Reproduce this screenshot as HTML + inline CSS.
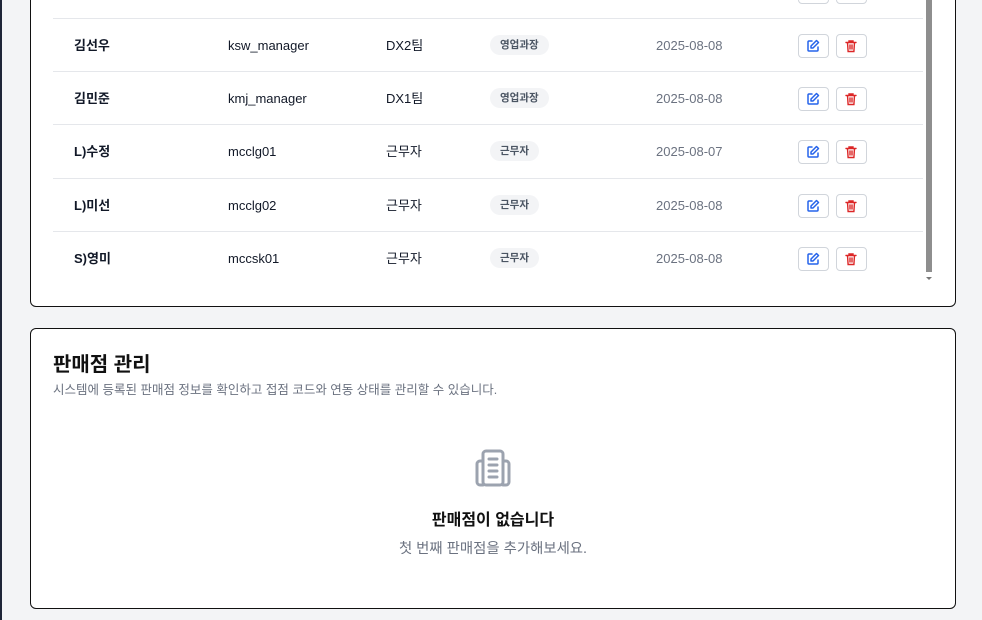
<!DOCTYPE html>
<html><head><meta charset="utf-8"><style>
body{margin:0;width:982px;height:620px;background:#f3f4f6;position:relative;overflow:hidden;font-family:"Liberation Sans","Noto Sans CJK KR",sans-serif;}
.edge{position:absolute;left:0;top:0;width:2px;height:620px;background:#1e2538;}
.card{position:absolute;left:30px;width:924px;background:#fff;border:1px solid #111;border-radius:6px;}
.row{position:absolute;left:22px;width:870px;height:53px;border-top:1px solid #e5e7eb;font-size:13px;color:#111827;}
.row span{position:absolute;top:0;line-height:53px;}
.badge{background:#f3f4f6;color:#4b5563;font-size:10.5px;border-radius:10px;padding:0 10px;top:16px!important;line-height:20px!important;font-weight:bold}
.btn{position:absolute;top:15px;width:29px;height:22px;border:1px solid #d1d5db;border-radius:4px;background:#fff;}
.btn svg{position:absolute;left:7px;top:4px}
.sb{position:absolute;left:926px;top:0;width:6px;height:272px;background:#8e8e8e;}
</style></head><body>
<div class="edge"></div>
<div class="card" style="top:-10px;height:315px;"></div>
<div class="sb"></div>
<div style="position:absolute;left:926px;top:277px;width:0;height:0;border-left:3px solid transparent;border-right:3px solid transparent;border-top:3px solid #777"></div>
<div id="rows"></div>
<div class="card" style="top:328px;height:279px;">
<div style="position:absolute;left:22px;top:19px;font-size:20px;font-weight:bold;color:#111">판매점 관리</div>
<div style="position:absolute;left:22px;top:50px;font-size:12.5px;color:#6b7280">시스템에 등록된 판매점 정보를 확인하고 접점 코드와 연동 상태를 관리할 수 있습니다.</div>
<svg style="position:absolute;left:442px;top:118px" width="42" height="42" viewBox="0 0 42 42" fill="none" stroke="#9ca3af" stroke-width="3" stroke-linecap="round"><rect x="10" y="4" width="20" height="34" rx="3"/><path d="M30 14h3a3 3 0 0 1 3 3v18a3 3 0 0 1-3 3h-3M10 14H7a3 3 0 0 0-3 3v18a3 3 0 0 0 3 3h3"/><path d="M16 12h8M16 18h8M16 24h8M16 30h8"/></svg>
<div style="position:absolute;left:0;width:924px;text-align:center;top:177px;font-size:16px;font-weight:bold;color:#111">판매점이 없습니다</div>
<div style="position:absolute;left:0;width:924px;text-align:center;top:208px;font-size:14.4px;color:#6b7280">첫 번째 판매점을 추가해보세요.</div>
</div>
<script>
var d=[["","","","",""],["김선우","ksw_manager","DX2팀","영업과장","2025-08-08"],["김민준","kmj_manager","DX1팀","영업과장","2025-08-08"],["L)수정","mcclg01","근무자","근무자","2025-08-07"],["L)미선","mcclg02","근무자","근무자","2025-08-08"],["S)영미","mccsk01","근무자","근무자","2025-08-08"]];
var tops=[-35,18,71,124,178,231];var h='';
var ed='<svg width="14" height="14" viewBox="0 0 14 14" fill="none" stroke="#2563eb" stroke-width="1.5" stroke-linecap="round" stroke-linejoin="round"><path d="M6 2H3a1 1 0 0 0-1 1v8a1 1 0 0 0 1 1h8a1 1 0 0 0 1-1V8"/><path d="M10.5 1.5l2 2L7 9H5V7z"/></svg>';
var tr='<svg width="14" height="14" viewBox="0 0 14 14" fill="none" stroke="#dc2626" stroke-width="1.4" stroke-linecap="round"><path d="M2 3.5h10M5 3.5V2h4v1.5M3.5 3.5l.6 9h5.8l.6-9M6 6v4M8 6v4"/></svg>';
d.forEach(function(r,i){h+='<div class="row" style="left:53px;top:'+tops[i]+'px;'+(i==0?'border-top:none':'')+'">'+(r[0]?'<span style="left:21px;font-weight:bold">'+r[0]+'</span><span style="left:175px">'+r[1]+'</span><span style="left:333px">'+r[2]+'</span><span class="badge" style="left:437px">'+r[3]+'</span><span style="left:603px;color:#6b7280">'+r[4]+'</span>':'')+'<div class="btn" style="left:745px">'+ed+'</div><div class="btn" style="left:783px">'+tr+'</div></div>';});
document.getElementById('rows').innerHTML=h;
</script>
</body></html>
